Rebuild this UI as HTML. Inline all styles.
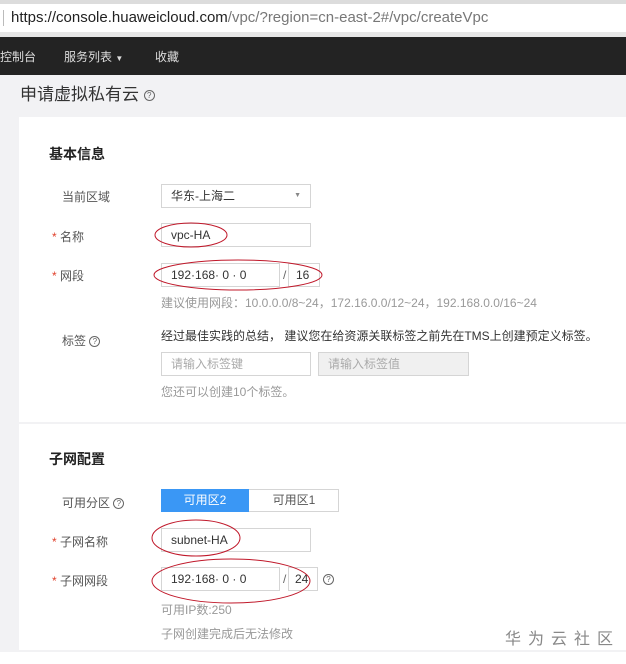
<!DOCTYPE html>
<html><head><meta charset="utf-8"><style>
*{margin:0;padding:0;box-sizing:border-box}
body{width:626px;height:664px;position:relative;overflow:hidden;background:#fff;font-family:"Liberation Sans","Noto Sans CJK SC",sans-serif;font-size:12px;color:#333}
.a{position:absolute;white-space:nowrap}
.inp{position:absolute;border:1px solid #d5d5d5;background:#fff;height:24px;line-height:22px;padding-left:9px;font-size:12px}
.lbl{color:#555;font-size:12px}
.star{color:#e0412c}
.hint{color:#999;font-size:12px}
.q{display:inline-block;width:11px;height:11px;border:1px solid #666;border-radius:50%;font-size:8px;line-height:9px;text-align:center;color:#666;vertical-align:middle}
</style></head><body>
<div class="a" style="left:0;top:0;width:626px;height:37px;background:#fff;border-top:4px solid #dcdcdc;border-bottom:5px solid #e6e6e6"></div>
<div class="a" style="left:3px;top:10px;width:1px;height:16px;background:#bbb"></div>
<div class="a" style="left:11px;top:9px;font-size:15px;color:#222">https://console.huaweicloud.com<span style="color:#777">/vpc/?region=cn-east-2#/vpc/createVpc</span></div>
<div class="a" style="left:0;top:37px;width:626px;height:38px;background:#232323"></div>
<div class="a" style="left:0;top:48px;color:#ddd;font-size:12px">控制台</div>
<div class="a" style="left:64px;top:48px;color:#ddd;font-size:12px">服务列表 <span style="font-size:8px">▼</span></div>
<div class="a" style="left:155px;top:48px;color:#ddd;font-size:12px">收藏</div>
<div class="a" style="left:0;top:75px;width:626px;height:577px;background:#f2f2f4"></div>
<div class="a" style="left:20px;top:80px;font-size:17px;color:#333">申请虚拟私有云 <span class="q">?</span></div>
<div class="a" style="left:19px;top:117px;width:607px;height:305px;background:#fff"></div>
<div class="a" style="left:19px;top:424px;width:607px;height:226px;background:#fff"></div>
<div class="a" style="left:49px;top:144px;font-size:14px;font-weight:bold;color:#222">基本信息</div>
<div class="a lbl" style="left:62px;top:188px">当前区域</div>
<div class="inp" style="left:161px;top:184px;width:150px">华东-上海二<span style="position:absolute;right:9px;font-size:7px;color:#888">▼</span></div>
<div class="a lbl" style="left:52px;top:228px"><span class="star">*</span> 名称</div>
<div class="inp" style="left:161px;top:223px;width:150px">vpc-HA</div>
<div class="a lbl" style="left:52px;top:267px"><span class="star">*</span> 网段</div>
<div class="inp" style="left:161px;top:263px;width:119px">192·168· 0 · 0</div>
<div class="a" style="left:283px;top:268px;color:#666">/</div>
<div class="inp" style="left:288px;top:263px;width:32px;padding-left:7px">16</div>
<div class="a hint" style="left:161px;top:294px">建议使用网段：10.0.0.0/8~24，172.16.0.0/12~24，192.168.0.0/16~24</div>
<div class="a lbl" style="left:62px;top:332px">标签 <span class="q">?</span></div>
<div class="a" style="left:161px;top:327px;color:#333">经过最佳实践的总结， 建议您在给资源关联标签之前先在TMS上创建预定义标签。</div>
<div class="inp" style="left:161px;top:352px;width:150px;color:#aaa">请输入标签键</div>
<div class="inp" style="left:318px;top:352px;width:151px;color:#aaa;background:#f0f0f0">请输入标签值</div>
<div class="a hint" style="left:161px;top:383px">您还可以创建10个标签。</div>
<div class="a" style="left:49px;top:449px;font-size:14px;font-weight:bold;color:#222">子网配置</div>
<div class="a lbl" style="left:62px;top:494px">可用分区 <span class="q">?</span></div>
<div class="a" style="left:161px;top:489px;width:178px;height:23px;border:1px solid #d5d5d5"></div>
<div class="a" style="left:161px;top:489px;width:88px;height:23px;background:#3a97f5;color:#fff;text-align:center;line-height:23px">可用区2</div>
<div class="a" style="left:249px;top:489px;width:90px;height:23px;color:#555;text-align:center;line-height:23px">可用区1</div>
<div class="a lbl" style="left:52px;top:533px"><span class="star">*</span> 子网名称</div>
<div class="inp" style="left:161px;top:528px;width:150px">subnet-HA</div>
<div class="a lbl" style="left:52px;top:572px"><span class="star">*</span> 子网网段</div>
<div class="inp" style="left:161px;top:567px;width:119px">192·168· 0 · 0</div>
<div class="a" style="left:283px;top:572px;color:#666">/</div>
<div class="inp" style="left:288px;top:567px;width:30px;padding-left:6px">24</div>
<div class="a" style="left:323px;top:572px"><span class="q">?</span></div>
<div class="a hint" style="left:161px;top:601px">可用IP数:250</div>
<div class="a hint" style="left:161px;top:625px">子网创建完成后无法修改</div>
<div class="a" style="left:505px;top:625px;font-size:16px;color:#888;letter-spacing:7px">华为云社区</div>
<svg class="a" style="left:0;top:0" width="626" height="664">
<g fill="none" stroke="#c0182a" stroke-width="1">
<ellipse cx="191" cy="235" rx="36" ry="12"/>
<ellipse cx="238" cy="275" rx="84" ry="15"/>
<ellipse cx="196" cy="538" rx="44" ry="18"/>
<ellipse cx="231" cy="581" rx="79" ry="22"/>
</g></svg>
</body></html>
